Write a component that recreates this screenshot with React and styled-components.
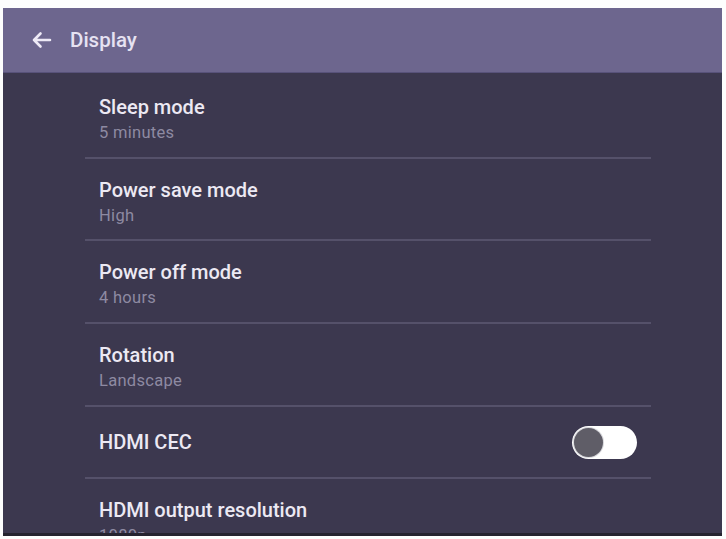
import React from "react";
import styled, { createGlobalStyle } from "styled-components";

const Global = createGlobalStyle`
  html, body { margin: 0; padding: 0; background: #ffffff; }
  body { font-family: Roboto, "Noto Sans", "Liberation Sans", sans-serif; }
`;

const Page = styled.div`
  width: 726px;
  height: 539px;
  box-sizing: border-box;
  padding: 8px 4px 3px 3px;
  background: #fdfdfd;
  overflow: hidden;
`;

const Screen = styled.div`
  height: 100%;
  display: flex;
  flex-direction: column;
  background: #3c384f;
  border-bottom: 3px solid #25232f;
  box-sizing: border-box;
  overflow: hidden;
`;

const Header = styled.div`
  height: 65px;
  flex: none;
  display: flex;
  align-items: center;
  gap: 18px;
  padding-left: 28px;
  background: #6d668e;
  border-bottom: 1px solid #58527a;
  box-sizing: border-box;
`;

const Title = styled.div`
  color: #e6e2f2;
  font-size: 20.5px;
  font-weight: 500;
  line-height: 24px;
`;

const List = styled.div`
  display: flex;
  flex-direction: column;
  margin-left: 82px;
  width: 566px;
  padding-top: 3px;
`;

const Row = styled.div`
  height: ${(p) => p.$h}px;
  flex: none;
  display: flex;
  align-items: ${(p) => (p.$center ? "center" : "flex-start")};
  justify-content: space-between;
  padding: ${(p) => (p.$center ? "0 14px" : "20px 14px 0")};
  box-sizing: border-box;
  border-bottom: ${(p) => (p.$last ? "none" : "2px solid #55516a")};
`;

const Texts = styled.div`
  display: flex;
  flex-direction: column;
  gap: 4px;
`;

const Label = styled.div`
  color: #ece9f3;
  font-size: 20px;
  font-weight: 500;
  line-height: 23px;
`;

const Sub = styled.div`
  color: #8e8aa2;
  font-size: 16.5px;
  line-height: 19px;
  letter-spacing: 0.3px;
`;

const Toggle = styled.div`
  width: 65px;
  height: 33px;
  border-radius: 17px;
  background: #ffffff;
  display: flex;
  align-items: center;
`;

const Knob = styled.div`
  width: 29px;
  height: 29px;
  margin-left: 2px;
  border-radius: 50%;
  background: #5f5d67;
  box-shadow: 0 0 0 1px #d8d8dc;
`;

const Arrow = () => (
  <svg width="21" height="18" viewBox="0 0 21 18" fill="none">
    <path d="M19 9H3M9.5 2.5 3 9 9.5 15.5" stroke="#eeeaf6" strokeWidth="2.6" strokeLinecap="round" strokeLinejoin="round" />
  </svg>
);

const rows = [
  { label: "Sleep mode", sub: "5 minutes", h: 83 },
  { label: "Power save mode", sub: "High", h: 82 },
  { label: "Power off mode", sub: "4 hours", h: 83 },
  { label: "Rotation", sub: "Landscape", h: 83 },
];

export default function App() {
  return (
    <>
      <Global />
      <Page>
        <Screen>
          <Header>
            <Arrow />
            <Title>Display</Title>
          </Header>
          <List>
            {rows.map((r) => (
              <Row key={r.label} $h={r.h}>
                <Texts>
                  <Label>{r.label}</Label>
                  <Sub>{r.sub}</Sub>
                </Texts>
              </Row>
            ))}
            <Row $h={72} $center>
              <Label>HDMI CEC</Label>
              <Toggle>
                <Knob />
              </Toggle>
            </Row>
            <Row $h={82} $last>
              <Texts>
                <Label>HDMI output resolution</Label>
                <Sub>1080p</Sub>
              </Texts>
            </Row>
          </List>
        </Screen>
      </Page>
    </>
  );
}
